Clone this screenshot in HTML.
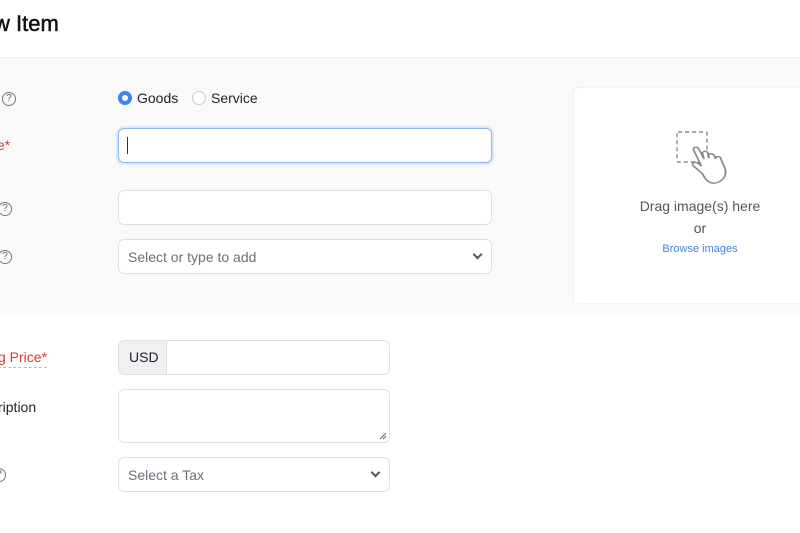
<!DOCTYPE html>
<html><head><style>
*{box-sizing:border-box;margin:0;padding:0}
body{width:800px;height:533px;overflow:hidden;background:#fff;font-family:"Liberation Sans",sans-serif;position:relative;color:#212529}
.a{position:absolute}
.gray{left:0;top:57px;width:800px;height:256px;background:#f9f9fa;border-top:1px solid #eee}
.inp{background:#fff;border:1px solid #dfe0e4;border-radius:6px}
.q{width:14px;height:14px;border:1px solid #777;border-radius:50%;font-size:10px;color:#666;text-align:center;line-height:12px}
.lbl{font-size:14px}
.red{color:#d6373a}
.ph{font-size:14px;color:#6b6f7b}
.chev{width:7px;height:7px;border-right:2px solid #555;border-bottom:2px solid #555;transform:rotate(45deg)}
</style></head><body>
<div class="a" style="left:-6px;top:11px;font-size:22px;color:#111;-webkit-text-stroke:0.5px #111">w Item</div>
<div class="a gray"></div>

<div class="a q" style="left:2px;top:92px">?</div>
<div class="a" style="left:118px;top:91px;width:14px;height:14px;border-radius:50%;background:#3b82f6"><div style="position:absolute;left:4px;top:4px;width:6px;height:6px;border-radius:50%;background:#fff"></div></div>
<div class="a lbl" style="left:137px;top:90px">Goods</div>
<div class="a" style="left:192px;top:91px;width:14px;height:14px;border-radius:50%;border:1px solid #ccc;background:#fff"></div>
<div class="a lbl" style="left:211px;top:90px">Service</div>

<div class="a lbl red" style="left:-3px;top:137px">e*</div>
<div class="a inp" style="left:118px;top:128px;width:374px;height:35px;border:1.5px solid #8fb5f0;box-shadow:0 0 0 2px #dbe8fb"><div style="position:absolute;left:8px;top:8px;width:1px;height:17px;background:#333"></div></div>

<div class="a q" style="left:-2px;top:202px">?</div>
<div class="a inp" style="left:118px;top:190px;width:374px;height:35px"></div>

<div class="a q" style="left:-2px;top:250px">?</div>
<div class="a inp" style="left:118px;top:239px;width:374px;height:35px"><div class="ph" style="position:absolute;left:9px;top:9px">Select or type to add</div><div class="chev" style="position:absolute;right:10px;top:11px"></div></div>

<div class="a" style="left:573px;top:87px;width:240px;height:217px;background:#fff;border:1px dotted #e6e6e6;border-radius:6px"></div>
<svg class="a" style="left:672px;top:128px" width="60" height="60" viewBox="0 0 60 60" fill="none" stroke="#8a8a8a" stroke-width="1.4">
<rect x="5" y="4" width="30" height="30" rx="1" stroke-dasharray="4 3"/>
<path transform="translate(19 0) scale(1.3 1) translate(-19 0)" d="M28 46 L21 38 C19 36 21 33 24 35 L27 38 L21 22 C20 19 24 18 25 21 L29 31 L28 26 C27 23 31 22 32 25 L33 30 L32 28 C32 25 36 25 37 28 L38 31 L38 30 C38 28 42 28 42 31 L45 40 C47 47 44 53 38 55 C33 56 30 52 28 46 Z" fill="#fff"/>
</svg>
<div class="a" style="left:573px;top:198px;width:254px;text-align:center;font-size:14px;color:#555">Drag image(s) here</div>
<div class="a" style="left:573px;top:220px;width:254px;text-align:center;font-size:14px;color:#555">or</div>
<div class="a" style="left:573px;top:243px;width:254px;text-align:center;font-size:11px;color:#3f84e0">Browse images</div>

<div class="a lbl red" style="left:-2px;top:349px;border-bottom:1px dashed #bbb;padding-bottom:2px">g Price*</div>
<div class="a inp" style="left:118px;top:340px;width:272px;height:35px;overflow:hidden"><div style="position:absolute;left:0;top:0;width:48px;height:35px;background:#f0f0f2;border-right:1px solid #dfe0e4;font-size:14px;line-height:33px;padding-left:10px">USD</div></div>

<div class="a lbl" style="left:-2px;top:399px">ription</div>
<div class="a inp" style="left:118px;top:389px;width:272px;height:54px"><svg style="position:absolute;right:2px;bottom:2px" width="8" height="8"><path d="M1 7L7 1M4 7L7 4" stroke="#666" stroke-width="1"/></svg></div>

<div class="a q" style="left:-8px;top:468px">?</div>
<div class="a inp" style="left:118px;top:457px;width:272px;height:35px"><div class="ph" style="position:absolute;left:9px;top:9px">Select a Tax</div><div class="chev" style="position:absolute;right:10px;top:11px"></div></div>
</body></html>
